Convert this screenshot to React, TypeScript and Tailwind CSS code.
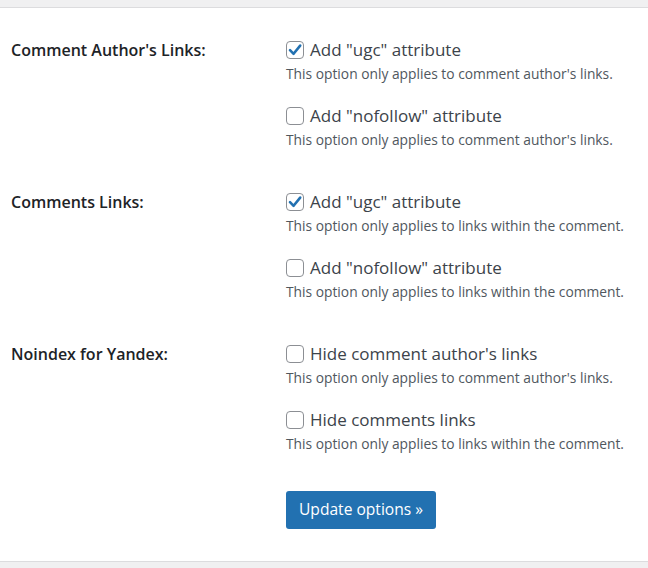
import React from "react";

type Opt = { label: string; desc: string; checked: boolean };

const sections: { title: string; options: Opt[] }[] = [
  {
    title: "Comment Author's Links:",
    options: [
      { label: 'Add "ugc" attribute', desc: "This option only applies to comment author's links.", checked: true },
      { label: 'Add "nofollow" attribute', desc: "This option only applies to comment author's links.", checked: false },
    ],
  },
  {
    title: "Comments Links:",
    options: [
      { label: 'Add "ugc" attribute', desc: "This option only applies to links within the comment.", checked: true },
      { label: 'Add "nofollow" attribute', desc: "This option only applies to links within the comment.", checked: false },
    ],
  },
  {
    title: "Noindex for Yandex:",
    options: [
      { label: "Hide comment author's links", desc: "This option only applies to comment author's links.", checked: false },
      { label: "Hide comments links", desc: "This option only applies to links within the comment.", checked: false },
    ],
  },
];

function Checkbox({ checked }: { checked: boolean }) {
  return (
    <span className="flex h-[18px] w-[18px] shrink-0 items-center justify-center rounded-[4px] border border-[#8c8f94] bg-white">
      {checked && (
        <svg width="16" height="16" viewBox="0 0 16 16">
          <path d="M3 8.2 L6.6 11.8 L13.2 3.6" fill="none" stroke="#2271b1" strokeWidth="2.6" strokeLinecap="round" strokeLinejoin="round" />
        </svg>
      )}
    </span>
  );
}

export default function App() {
  return (
    <div className="min-h-[568px] bg-[#f0f0f1] pt-[7px] pb-[6px] font-['Open_Sans',sans-serif]">
      <div className="border-y border-[#dcdcde] bg-white pl-[11px] pt-[30px] pb-[32px]">
        {sections.map((s, i) => (
          <div key={s.title} className={`flex ${i > 0 ? "mt-10" : ""}`}>
            <div className="w-[275px] shrink-0 text-[16px] leading-6 font-semibold text-[#1d2327]">{s.title}</div>
            <div className="flex flex-col">
              {s.options.map((o, j) => (
                <div key={o.label} className={j > 0 ? "mt-5" : ""}>
                  <label className="flex h-6 items-center gap-[6px] text-[17px] text-[#3c434a]">
                    <Checkbox checked={o.checked} />
                    <span>{o.label}</span>
                  </label>
                  <p className="mt-[2px] text-[13.8px] leading-5 text-[#50575e]">{o.desc}</p>
                </div>
              ))}
            </div>
          </div>
        ))}
        <div className="mt-[37px] pl-[275px]">
          <button className="h-[38px] w-[150px] rounded-[3px] bg-[#2271b1] text-[15.6px] text-white">
            Update options »
          </button>
        </div>
      </div>
    </div>
  );
}
